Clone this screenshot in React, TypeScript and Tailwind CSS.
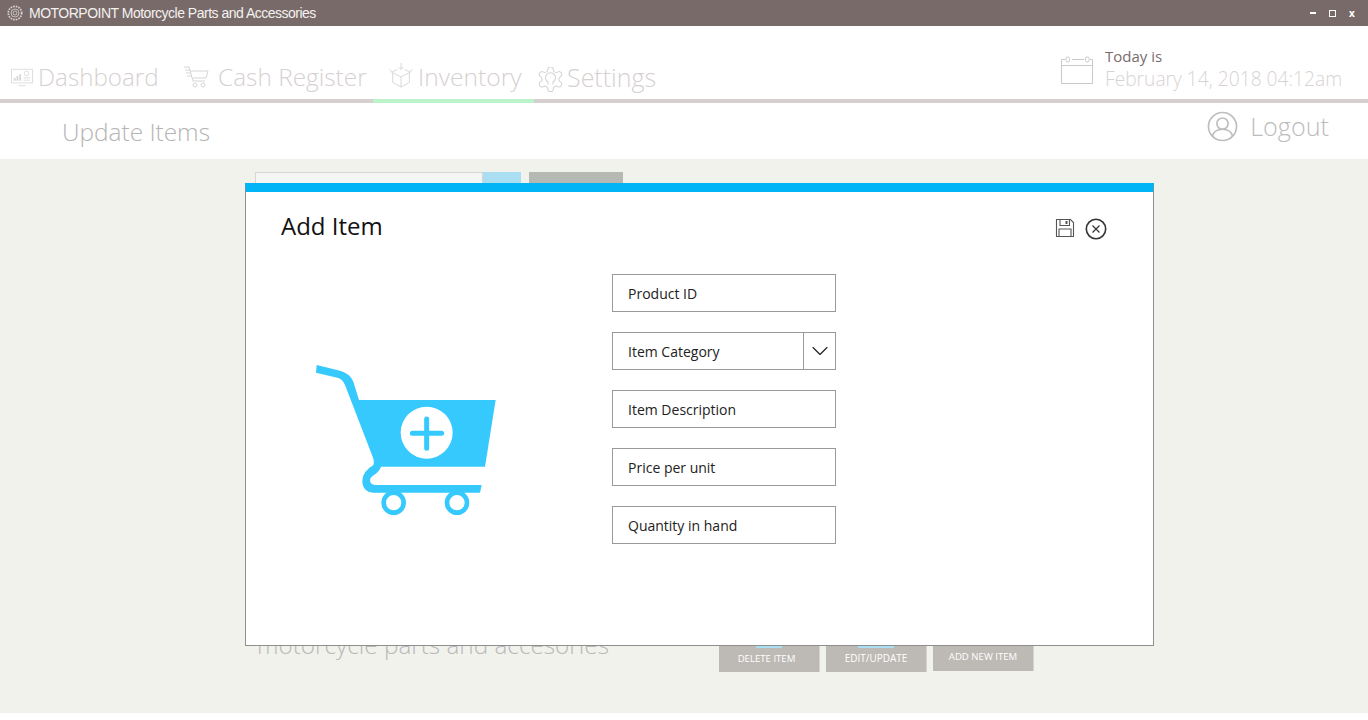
import { ChevronDown } from "lucide-react";

const F = "font-['Open_Sans','Noto_Sans',sans-serif]";

function GearSmall() {
  return (
    <svg width="16" height="16" viewBox="0 0 24 24" fill="none" stroke="#d8d2d0" strokeWidth="1.2">
      <circle cx="12" cy="12" r="10" strokeDasharray="2.5 1.5" strokeWidth="2.6" />
      <circle cx="12" cy="12" r="6" />
      <circle cx="12" cy="12" r="3" />
    </svg>
  );
}

function DashIcon() {
  return (
    <svg width="22" height="20" viewBox="0 0 24 22" fill="none" stroke="#dcdcdc">
      <rect x="0.5" y="2.5" width="23" height="15" />
      <path d="M8 20.5h8" />
      <path d="M4 15v-3M7 15v-5M10 15V8" strokeWidth="2" stroke="#d6d6d6" />
      <circle cx="17" cy="7" r="2.5" />
      <path d="M13.5 12h7M13.5 14.5h7" />
    </svg>
  );
}

function CartIcon() {
  return (
    <svg width="26" height="26" viewBox="0 0 26 26" fill="none" stroke="#d6d6d6">
      <path d="M1 3h5l4 14h12M7.5 7H25l-2 7H10" />
      <path d="M2 6h5M3 9h5M4 12h5" />
      <circle cx="12" cy="21" r="2" />
      <circle cx="20" cy="21" r="2" />
    </svg>
  );
}

function BoxIcon() {
  return (
    <svg width="26" height="26" viewBox="0 0 26 28" fill="none" stroke="#d6d6d6" className="-mt-[4px]">
      <path d="M13 1v7M10.5 5.5L13 8l2.5-2.5" />
      <path d="M3 11l10 5 10-5-6-3M9 8l-6 3" />
      <path d="M1 8l2 3M25 8l-2 3" />
      <path d="M4 12v10l9 5 9-5V12M13 16v11" />
    </svg>
  );
}

function CogIcon() {
  return (
    <svg width="25" height="25" viewBox="2 2 20 20" fill="none" stroke="#d4d4d4" strokeWidth="0.85" className="mt-[5px]">
      <path d="M12.2 2h-.4a2 2 0 0 0-2 2v.2a2 2 0 0 1-1 1.7l-.4.2a2 2 0 0 1-2 0l-.2-.1a2 2 0 0 0-2.7.7l-.2.4a2 2 0 0 0 .7 2.7l.2.1a2 2 0 0 1 1 1.7v.5a2 2 0 0 1-1 1.7l-.2.1a2 2 0 0 0-.7 2.7l.2.4a2 2 0 0 0 2.7.7l.2-.1a2 2 0 0 1 2 0l.4.2a2 2 0 0 1 1 1.7v.2a2 2 0 0 0 2 2h.4a2 2 0 0 0 2-2v-.2a2 2 0 0 1 1-1.7l.4-.2a2 2 0 0 1 2 0l.2.1a2 2 0 0 0 2.7-.7l.2-.4a2 2 0 0 0-.7-2.7l-.2-.1a2 2 0 0 1-1-1.7v-.5a2 2 0 0 1 1-1.7l.2-.1a2 2 0 0 0 .7-2.7l-.2-.4a2 2 0 0 0-2.7-.7l-.2.1a2 2 0 0 1-2 0l-.4-.2a2 2 0 0 1-1-1.7V4a2 2 0 0 0-2-2z" />
      <path d="M10 16v-2a4 4 0 1 1 4 0v2" />
    </svg>
  );
}

function CalendarIcon() {
  return (
    <svg width="34" height="32" viewBox="0 0 34 32" fill="none" stroke="#c9c9c9">
      <path d="M5 6.5H1.5v24h31V9M1.5 12.5h31" />
      <path d="M30 6.5h2.5V9M12 6.5h12" />
      <rect x="6" y="4" width="3.5" height="5" rx="1.5" />
      <rect x="25.5" y="4" width="3.5" height="5" rx="1.5" />
    </svg>
  );
}

function UserIcon() {
  return (
    <svg width="31" height="31" viewBox="0 0 32 32" fill="none" stroke="#bdbdbd" strokeWidth="1.7">
      <circle cx="16" cy="16" r="14.5" />
      <circle cx="16" cy="13" r="5.8" />
      <path d="M5.5 26c1.5-5 5-7.2 10.5-7.2S25 21 26.5 26" />
    </svg>
  );
}

function SaveIcon() {
  return (
    <svg width="20" height="20" viewBox="0 0 20 20" fill="none" stroke="#555" strokeWidth="1.1">
      <path d="M1.5 1.5h14l3 3v14h-17z" />
      <path d="M5 1.5v6h9.5v-6" />
      <path d="M4 18.5v-7.5h12v7.5" />
      <path d="M11.5 3v3" strokeWidth="2" />
    </svg>
  );
}

function CloseIcon() {
  return (
    <svg width="22" height="22" viewBox="0 0 22 22" fill="none" stroke="#333">
      <circle cx="11" cy="11" r="9.7" strokeWidth="1.6" />
      <path d="M7.5 7.5l7 7M14.5 7.5l-7 7" strokeWidth="1.2" />
    </svg>
  );
}

function BigCart() {
  return (
    <svg width="210" height="175" viewBox="0 0 630 525">
      <path
        fill="#36c9fd"
        d="M50 45 L120 62 Q150 70 160 95 L177 150 L587 150 L555 350 L243 350 Q238 365 222 375 Q205 385 212 398 Q217 405 230 405 L545 405 L540 428 L220 428 Q187 425 187 392 Q187 365 220 345 Q224 335 218 320 L135 105 Q128 88 115 84 L48 68 Z"
      />
      <circle cx="281" cy="458" r="30" fill="#fff" stroke="#36c9fd" strokeWidth="14" />
      <circle cx="471" cy="458" r="30" fill="#fff" stroke="#36c9fd" strokeWidth="14" />
      <circle cx="380" cy="248" r="78" fill="#fff" />
      <path d="M380 207V295M337 250H425" stroke="#36c9fd" strokeWidth="15" strokeLinecap="round" />
    </svg>
  );
}

function Field({ label }: { label: string }) {
  return (
    <div className="h-[38px] w-[224px] border border-[#999] bg-white flex items-center pl-[15px] text-[14px] text-[#222]">
      {label}
    </div>
  );
}

function NavItem({
  icon,
  label,
  className,
  labelClass,
}: {
  icon: React.ReactNode;
  label: string;
  className: string;
  labelClass: string;
}) {
  return (
    <div className={`flex items-center ${className}`}>
      {icon}
      <span className={`${labelClass} text-[#d6d1d1] font-light leading-none`}>{label}</span>
    </div>
  );
}

export default function App() {
  return (
    <div className={`relative h-[720px] w-[1368px] overflow-hidden bg-white ${F}`}>
      {/* Title bar */}
      <div className="h-[26px] bg-[#786a68] flex items-center pl-[7px] pr-[12px] text-white">
        <GearSmall />
        <span className="ml-[6px] text-[14px] font-['Liberation_Sans',sans-serif] tracking-[-0.5px] text-[#f4f1f0]">
          MOTORPOINT Motorcycle Parts and Accessories
        </span>
        <div className="ml-auto flex items-center gap-[13px]">
          <span className="block h-[2px] w-[6px] bg-white" />
          <span className="block h-[7px] w-[7px] border-[1.5px] border-white" />
          <span className="block text-[10px] font-bold leading-none w-[7px]">x</span>
        </div>
      </div>

      {/* Nav */}
      <div className="h-[73px] flex items-end justify-between">
        <div className="flex items-center h-[40px] mb-[2px] pl-[10px]">
          <NavItem icon={<DashIcon />} label="Dashboard" labelClass="text-[24.2px]" className="gap-[5px] w-[172px] pl-[1px]" />
          <NavItem icon={<CartIcon />} label="Cash Register" labelClass="text-[24.4px]" className="gap-[9px] w-[191px] ml-[1px]" />
          <NavItem icon={<BoxIcon />} label="Inventory" labelClass="text-[24.6px]" className="gap-[4px] w-[162px] pl-[15px] -ml-[1px]" />
          <NavItem icon={<CogIcon />} label="Settings" labelClass="text-[25px]" className="gap-[4px] ml-[3px]" />
        </div>
        <div className="flex items-center gap-[11px] w-[308px] pb-[7px]">
          <CalendarIcon />
          <div className="flex flex-col">
            <span className="text-[15px] leading-[20px] text-[#7a6c6a]">Today is</span>
            <span className="text-[19.2px] leading-[26px] text-[#d8d3d3] font-light whitespace-nowrap">
              February 14, 2018 04:12am
            </span>
          </div>
        </div>
      </div>
      <div className="h-[4px] bg-[#d5cfcf] pl-[373px]">
        <div className="h-[4px] w-[161px] bg-[#bdf3cb]" />
      </div>

      {/* Subheader */}
      <div className="h-[56px] flex items-center justify-between pl-[62px] pr-[39px]">
        <span className="text-[24.4px] text-[#b4b4b4] font-light mt-[3px]">Update Items</span>
        <div className="flex items-center gap-[12px] mb-[8px]">
          <UserIcon />
          <span className="text-[25.2px] text-[#bcbcbc] font-light">Logout</span>
        </div>
      </div>

      {/* Body */}
      <div className="h-[554px] bg-[#f2f2ed] flex flex-col justify-between pl-[255px] pt-[13px] pb-[41px]">
        <div className="flex h-[30px]">
          <div className="w-[228px] border border-[#d6d6d3] bg-[#f5f5f3]" />
          <div className="w-[38px] bg-[#a9def3]" />
          <div className="ml-[8px] w-[94px] bg-[#b6b9b3]" />
        </div>
        <div className="flex items-end">
          <span className="w-[462px] text-[24.3px] leading-[30px] text-[#b9b9b9] font-light whitespace-nowrap mb-[12px] ml-[2px]">
            motorcycle parts and accesories
          </span>
          <div className="flex gap-[6px] items-start text-[9.6px] text-white">
            <div className="w-[101px] h-[40px] bg-[#bdb9b5] border-r border-[#d3d3cf] flex flex-col items-center justify-between pt-[14px] pb-[6px]">
              <span className="block h-[2px] w-[26px] bg-[#a9def3]" />
              <span className="-ml-[5px]">DELETE ITEM</span>
            </div>
            <div className="w-[101px] h-[40px] bg-[#bdb9b5] border-r border-[#d3d3cf] flex flex-col items-center justify-between pt-[14px] pb-[6px]">
              <span className="block h-[2px] w-[36px] bg-[#a9def3]" />
              <span className="text-[10px]">EDIT/UPDATE</span>
            </div>
            <div className="w-[101px] h-[40px] bg-[#bdb9b5] border-r border-[#d3d3cf] flex items-end justify-center pb-[7px] -mt-[1px]">ADD NEW ITEM</div>
          </div>
        </div>
      </div>

      {/* Modal */}
      <div className="absolute left-[245px] top-[183px] w-[909px] h-[463px] bg-white border-x border-b border-[#8f8f8f] border-t-[9px] border-t-[#00b4f5] flex">
        <div className="w-[366px] pl-[35px] flex flex-col">
          <div className="text-[24px] leading-[32px] text-[#111] mt-[18px]">Add Item</div>
          <div className="mt-[108px] ml-[19px]">
            <BigCart />
          </div>
        </div>
        <div className="flex flex-col gap-[20px] pt-[82px]">
          <Field label="Product ID" />
          <div className="h-[38px] w-[224px] border border-[#999] flex text-[14px] text-[#222]">
            <div className="flex-1 flex items-center pl-[15px]">Item Category</div>
            <div className="w-[32px] border-l border-[#999] flex items-center justify-center">
              <ChevronDown size={28} strokeWidth={1} color="#222" />
            </div>
          </div>
          <Field label="Item Description" />
          <Field label="Price per unit" />
          <Field label="Quantity in hand" />
        </div>
        <div className="ml-auto flex items-start gap-[10px] pt-[26px] pr-[46px]">
          <SaveIcon />
          <CloseIcon />
        </div>
      </div>
    </div>
  );
}
